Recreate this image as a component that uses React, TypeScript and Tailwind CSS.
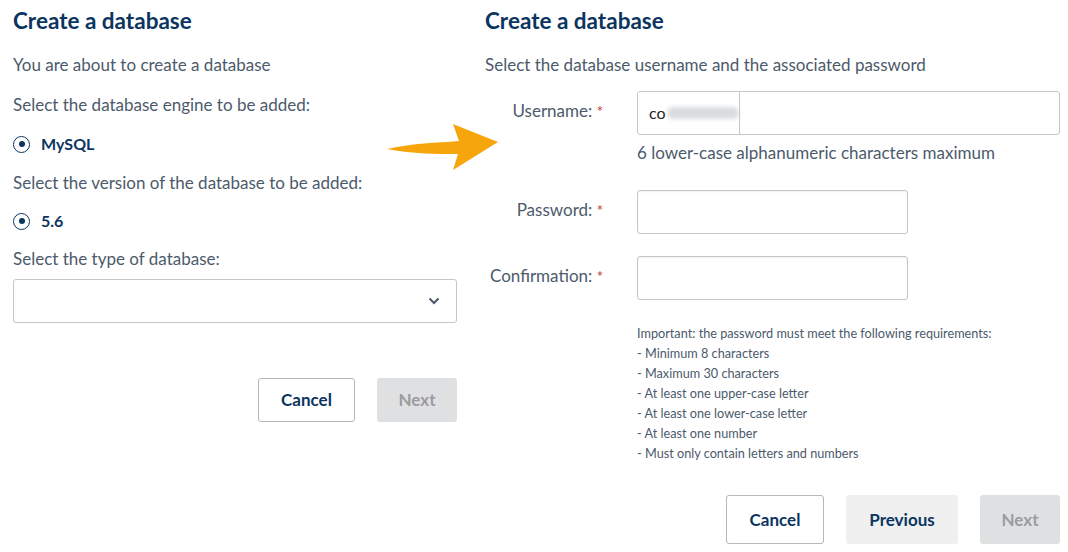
import React from 'react'

const font = { fontFamily: 'Lato, "Noto Sans", sans-serif' }

function Radio({ label }: { label: string }) {
  return (
    <div className="flex items-center gap-[11px] h-[20px]">
      <span className="w-[17px] h-[17px] rounded-full border-[1.5px] border-[#0b3560] flex items-center justify-center">
        <span className="w-[6px] h-[6px] rounded-full bg-[#0b3560]" />
      </span>
      <span className="text-[16px] font-bold text-[#0b3560]">{label}</span>
    </div>
  )
}

function Label({ text }: { text: string }) {
  return (
    <div className="w-[120px] text-right text-[17px] leading-[24px] text-[#4c5a6b] pt-[8px] pr-[2px] whitespace-nowrap">
      {text} <span className="text-[#c0392b] text-[15px]">*</span>
    </div>
  )
}

function Arrow() {
  return (
    <svg className="absolute left-[385px] top-[122px]" width="115" height="52" viewBox="0 0 115 52">
      <path
        d="M2 27 C 30 21, 50 21, 74 19 L 68 2 L 113 20 L 68 48 L 73 32 C 50 32, 30 32, 2 27 Z"
        fill="#f7a50c"
      />
    </svg>
  )
}

export default function App() {
  return (
    <div className="relative w-[1068px] h-[552px] bg-white overflow-hidden" style={font}>
      <Arrow />
      <div className="flex">
        {/* left panel */}
        <div className="w-[444px] ml-[13px] pt-[6px]">
          <h1 className="text-[22.5px] font-bold text-[#0b3560] leading-[30px]">Create a database</h1>
          <p className="mt-[17px] text-[17px] text-[#4c5a6b] leading-[24px]">You are about to create a database</p>
          <p className="mt-[16px] text-[17px] text-[#4c5a6b] leading-[24px]">Select the database engine to be added:</p>
          <div className="mt-[17px]">
            <Radio label="MySQL" />
          </div>
          <p className="mt-[17px] text-[17px] text-[#4c5a6b] leading-[24px]">Select the version of the database to be added:</p>
          <div className="mt-[16px]">
            <Radio label="5.6" />
          </div>
          <p className="mt-[16px] text-[17px] text-[#4c5a6b] leading-[24px]">Select the type of database:</p>
          <div className="mt-[8px] h-[44px] border border-[#c4c6c9] rounded-[3px] flex items-center justify-end pr-[16px]">
            <svg width="12" height="8" viewBox="0 0 12 8">
              <path d="M1.5 1.5 L6 6 L10.5 1.5" fill="none" stroke="#4c5a6b" strokeWidth="2" />
            </svg>
          </div>
          <div className="mt-[55px] flex justify-end gap-[22px]">
            <button className="w-[97px] h-[44px] border border-[#b5b7ba] rounded-[3px] text-[17px] font-bold text-[#0b3560]">
              Cancel
            </button>
            <button className="w-[80px] h-[44px] rounded-[3px] bg-[#dfe0e2] text-[17px] font-bold text-[#9a9c9f]">
              Next
            </button>
          </div>
        </div>

        {/* right panel */}
        <div className="ml-[28px] w-[575px] pt-[6px]">
          <h1 className="text-[22.5px] font-bold text-[#0b3560] leading-[30px]">Create a database</h1>
          <p className="mt-[17px] text-[17px] text-[#4c5a6b] leading-[24px]">
            Select the database username and the associated password
          </p>
          <div className="mt-[14px] flex gap-[32px]">
            <Label text="Username:" />
            <div className="flex-1">
              <div className="h-[44px] border border-[#c4c6c9] rounded-[3px] flex">
                <div className="w-[102px] border-r border-[#c4c6c9] flex items-center pl-[11px] text-[16px] text-[#222]">
                  co
                  <span className="ml-[1px] w-[78px] h-[12px] rounded-full bg-[#d9dbde] blur-[2px]" />
                </div>
              </div>
              <p className="mt-[6px] text-[17px] text-[#4c5a6b] leading-[24px]">6 lower-case alphanumeric characters maximum</p>
            </div>
          </div>
          <div className="mt-[25px] flex gap-[32px]">
            <Label text="Password:" />
            <div className="w-[271px] h-[44px] border border-[#c4c6c9] rounded-[3px] shadow-[inset_0_1px_2px_rgba(0,0,0,0.06)]" />
          </div>
          <div className="mt-[22px] flex gap-[32px]">
            <Label text="Confirmation:" />
            <div className="w-[271px] h-[44px] border border-[#c4c6c9] rounded-[3px] shadow-[inset_0_1px_2px_rgba(0,0,0,0.06)]" />
          </div>
          <div className="mt-[23px] ml-[152px] text-[12.7px] leading-[20px] text-[#4c5a6b]">
            <p>Important: the password must meet the following requirements:</p>
            <p>- Minimum 8 characters</p>
            <p>- Maximum 30 characters</p>
            <p>- At least one upper-case letter</p>
            <p>- At least one lower-case letter</p>
            <p>- At least one number</p>
            <p>- Must only contain letters and numbers</p>
          </div>
          <div className="mt-[32px] flex justify-end gap-[22px]">
            <button className="w-[98px] h-[49px] border border-[#b5b7ba] rounded-[3px] text-[17px] font-bold text-[#0b3560]">
              Cancel
            </button>
            <button className="w-[112px] h-[49px] rounded-[3px] bg-[#f0f0f0] text-[17px] font-bold text-[#0b3560]">
              Previous
            </button>
            <button className="w-[80px] h-[49px] rounded-[3px] bg-[#dfe0e2] text-[17px] font-bold text-[#9a9c9f]">
              Next
            </button>
          </div>
        </div>
      </div>
    </div>
  )
}
